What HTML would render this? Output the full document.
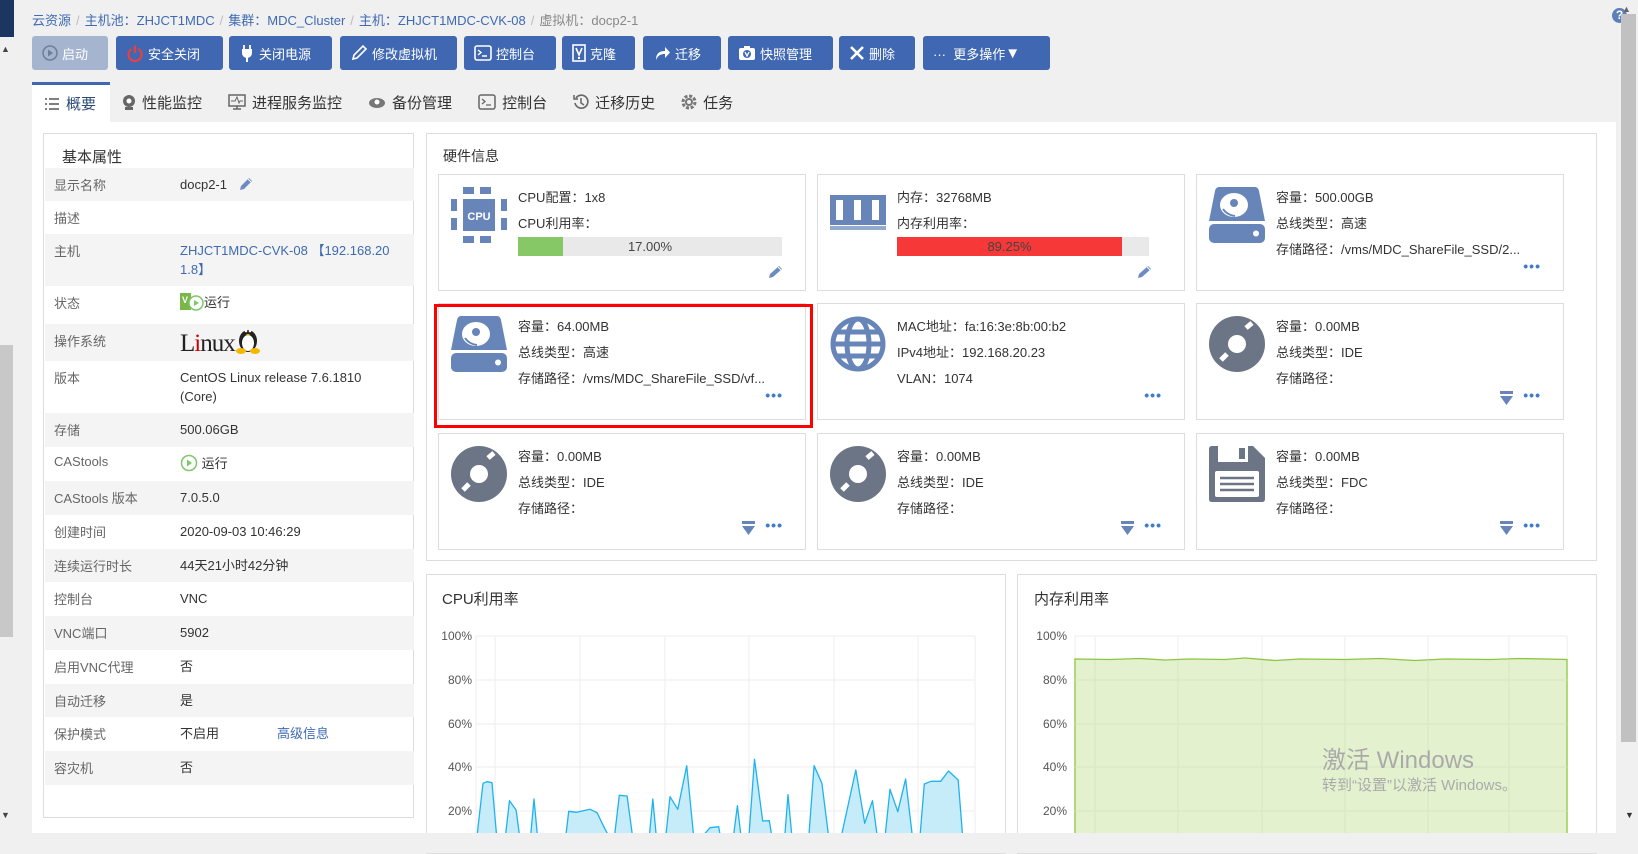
<!DOCTYPE html>
<html><head><meta charset="utf-8">
<style>
*{box-sizing:border-box;margin:0;padding:0}
body{width:1638px;height:844px;overflow:hidden;background:#f0f0f0;font-family:"Liberation Sans","Noto Sans CJK SC",sans-serif;font-size:13px;color:#333;position:relative}
.abs{position:absolute}
.bc{left:32px;top:10px;font-size:13px;color:#3f6ab3;white-space:nowrap}
.bc span.s{color:#bbb;margin:0 5px}
.bc .cur{color:#888}
.btn{position:absolute;top:36px;height:34px;background:#4068b2;border-radius:3px;color:#fff;font-size:13px;display:flex;align-items:center;padding-left:10px;white-space:nowrap}
.btn svg{margin-right:4px}
.tabs{left:32px;top:82px;height:40px;display:flex}
.tab{height:40px;display:flex;align-items:center;font-size:15px;color:#333;padding:0 14px 0 12px}
.tab.act{background:#fff;border-top:3px solid #4068b2;color:#2e4a7a}
.tab svg{margin-right:6px}
.main{left:32px;top:122px;width:1584px;height:711px;background:#fff}
.panel{position:absolute;border:1px solid #ddd;background:#fff}
.row{position:absolute;left:1px;width:369px;font-size:13px}
.row .l{position:absolute;left:9px;top:7px;color:#666}
.row .v{position:absolute;left:135px;top:7px;color:#333;width:225px;line-height:19px}
.g{background:#f4f4f4}
.card{position:absolute;width:368px;height:117px;border:1px solid #ddd;background:#fff}
.card .t{position:absolute;left:79px;font-size:13px;color:#333;white-space:nowrap}
.card .ic{position:absolute;left:12px;top:12px}
.dots{position:absolute;right:22px;bottom:16px;color:#3f7cc9;font-size:14px;font-weight:bold;letter-spacing:1px}
.tri{position:absolute;right:50px;bottom:14px}
.ylab{position:absolute;font-size:12px;color:#555;text-align:right;width:40px}
</style></head><body>

<div class="abs" style="left:0;top:0;width:14px;height:37px;background:#1b3660"></div>
<div class="abs" style="left:0;top:37px;width:14px;height:800px;background:#f0f0f0"></div>
<div class="abs" style="left:1px;top:44px;font-size:9px;color:#444">▲</div>
<div class="abs" style="left:0;top:345px;width:13px;height:292px;background:#c8c8c8"></div>
<div class="abs" style="left:1px;top:810px;font-size:9px;color:#444">▼</div>

<div class="abs bc"><span>云资源</span><span class="s">/</span><span>主机池：ZHJCT1MDC</span><span class="s">/</span><span>集群：MDC_Cluster</span><span class="s">/</span><span>主机：ZHJCT1MDC-CVK-08</span><span class="s">/</span><span class="cur">虚拟机：docp2-1</span></div>

<div class="abs" style="left:1612px;top:8px;width:15px;height:15px;border-radius:50%;background:#5b7fb8;color:#fff;font-size:12px;font-weight:bold;text-align:center;line-height:15px">?</div>
<div class="abs" style="left:1621px;top:28px;width:17px;height:816px;background:#f0f0f0"></div>
<div class="abs" style="left:1622px;top:4px;font-size:9px;color:#666">▲</div>
<div class="abs" style="left:1621px;top:14px;width:15px;height:728px;background:#c1c1c1"></div>
<div class="abs" style="left:1625px;top:810px;font-size:9px;color:#333">▼</div>

<div class="btn" style="left:32px;width:76px;background:#a5b5d0"><svg width="16" height="16"><circle cx="8" cy="8" r="7" fill="none" stroke="#6e7e98" stroke-width="1.5"/><path d="M6 4.5 L11 8 L6 11.5Z" fill="#6e7e98"/></svg>启动</div>
<div class="btn" style="left:116px;width:107px"><svg width="18" height="18"><path d="M5.5 5 A6.5 6.5 0 1 0 12.5 5" fill="none" stroke="#e74040" stroke-width="2.2"/><path d="M9 1.5 V9" stroke="#e74040" stroke-width="2.4"/></svg>安全关闭</div>
<div class="btn" style="left:229px;width:103px"><svg width="16" height="18"><path d="M5 1v4M11 1v4" stroke="#fff" stroke-width="1.8"/><path d="M3 5h10v4a5 5 0 0 1-10 0z" fill="#fff"/><path d="M8 13v5" stroke="#fff" stroke-width="2"/></svg>关闭电源</div>
<div class="btn" style="left:340px;width:117px"><svg width="18" height="18"><path d="M3 15 L4 11 L13 2 L16 5 L7 14Z" fill="none" stroke="#fff" stroke-width="1.6"/></svg>修改虚拟机</div>
<div class="btn" style="left:464px;width:92px"><svg width="18" height="16"><rect x="1" y="1" width="16" height="14" rx="2" fill="none" stroke="#fff" stroke-width="1.6"/><path d="M4 5l3 2.5-3 2.5M8 11h5" stroke="#fff" stroke-width="1.4" fill="none"/></svg>控制台</div>
<div class="btn" style="left:562px;width:73px"><svg width="14" height="18"><rect x="1" y="1" width="12" height="16" fill="none" stroke="#fff" stroke-width="1.6"/><path d="M4 4l3 7 3-7" stroke="#fff" stroke-width="1.6" fill="none"/><rect x="6" y="13" width="2" height="2" fill="#fff"/></svg>克隆</div>
<div class="btn" style="left:643px;width:78px"><svg width="18" height="16"><path d="M3 15 C3 8 7 6 12 6 V2 L17 7.5 L12 13 V9 C8 9 5 10 3 15Z" fill="#fff"/></svg>迁移</div>
<div class="btn" style="left:728px;width:105px"><svg width="18" height="16"><rect x="1" y="3" width="16" height="12" rx="2" fill="#fff"/><rect x="6" y="1" width="6" height="3" fill="#fff"/><circle cx="9" cy="9" r="4" fill="#4068b2"/><path d="M7 7l2 4 2-4" stroke="#fff" stroke-width="1.3" fill="none"/></svg>快照管理</div>
<div class="btn" style="left:839px;width:76px"><svg width="16" height="16"><path d="M2 2L14 14M14 2L2 14" stroke="#fff" stroke-width="2.6"/></svg>删除</div>
<div class="btn" style="left:923px;width:127px">··· &nbsp;更多操作<span style="font-size:15px">▼</span></div>

<div class="abs tabs">
<div class="tab act"><svg width="16" height="14"><path d="M1 2h2M5 2h10M1 7h2M5 7h10M1 12h2M5 12h10" stroke="#555" stroke-width="1.5"/></svg>概要</div>
<div class="tab"><svg width="14" height="16"><circle cx="7" cy="7" r="6" fill="#666"/><circle cx="7" cy="7" r="2.5" fill="#fff"/><rect x="3" y="13" width="8" height="3" fill="#666"/></svg>性能监控</div>
<div class="tab"><svg width="18" height="16"><rect x="1" y="1" width="16" height="11" fill="none" stroke="#666" stroke-width="1.5"/><path d="M3 7h4l2-4 2 6 1-2h3" stroke="#666" fill="none"/><path d="M9 12v3M5 15h8" stroke="#666" stroke-width="1.5"/></svg>进程服务监控</div>
<div class="tab"><svg width="18" height="14"><ellipse cx="9" cy="8" rx="8" ry="5" fill="#777"/><circle cx="9" cy="7" r="2.5" fill="#fff"/></svg>备份管理</div>
<div class="tab"><svg width="18" height="16"><rect x="1" y="1" width="16" height="14" rx="2" fill="none" stroke="#666" stroke-width="1.5"/><path d="M4 5l3 2.5-3 2.5M8 11h5" stroke="#666" stroke-width="1.3" fill="none"/></svg>控制台</div>
<div class="tab"><svg width="16" height="16"><path d="M3 4 A6.5 6.5 0 1 1 2 9" fill="none" stroke="#666" stroke-width="1.6"/><path d="M1 1v4h4" stroke="#666" stroke-width="1.5" fill="none"/><path d="M8 4v5l3 2" stroke="#666" stroke-width="1.5" fill="none"/></svg>迁移历史</div>
<div class="tab"><svg width="16" height="16"><circle cx="8" cy="8" r="6" fill="none" stroke="#777" stroke-width="3" stroke-dasharray="3 1.7"/><circle cx="8" cy="8" r="3" fill="none" stroke="#777" stroke-width="2"/></svg>任务</div>
</div>

<div class="abs main"></div>

<div class="panel" style="left:43px;top:133px;width:371px;height:685px">
<div class="abs" style="left:18px;top:12px;font-size:15px;color:#333">基本属性</div>
<div class="row g" style="top:34px;height:33px"><span class="l">显示名称</span><span class="v">docp2-1 &nbsp; <svg width="16" height="16" style="vertical-align:-3px"><path d="M2 14 L3 10 L11 2 L14 5 L6 13Z" fill="#6d8bc2"/><path d="M10 3l3 3" stroke="#fff"/></svg></span></div>
<div class="row" style="top:67px;height:33px"><span class="l">描述</span></div>
<div class="row g" style="top:100px;height:52px"><span class="l">主机</span><span class="v" style="color:#3f6ab3">ZHJCT1MDC-CVK-08 【192.168.20<br>1.8】</span></div>
<div class="row" style="top:152px;height:38px"><span class="l">状态</span><span class="v"><svg width="24" height="18" style="vertical-align:-4px"><rect x="0" y="0" width="11" height="17" fill="#7ab648"/><text x="2" y="10" font-size="9" fill="#fff" font-weight="bold" font-family="Liberation Sans">V</text><circle cx="16" cy="10" r="7" fill="#fff" stroke="#7cc86a" stroke-width="1.5"/><path d="M14 7l5 3-5 3z" fill="#7cc86a"/></svg>运行</span></div>
<div class="row g" style="top:190px;height:37px"><span class="l">操作系统</span><span class="v" style="top:0px;font-family:'Liberation Serif',serif;font-size:25px;color:#222;letter-spacing:-1px">L<span style="color:#c00">i</span>nux<svg width="26" height="30" style="vertical-align:-3px"><ellipse cx="13" cy="17" rx="9" ry="11" fill="#222"/><ellipse cx="13" cy="19" rx="6" ry="8" fill="#fff"/><circle cx="11" cy="7" r="1.3" fill="#fff"/><circle cx="15" cy="7" r="1.3" fill="#fff"/><path d="M11 10h4l-2 2z" fill="#f5b800"/><ellipse cx="6" cy="27" rx="5" ry="3" fill="#f5b800"/><ellipse cx="20" cy="27" rx="5" ry="3" fill="#f5b800"/></svg></span></div>
<div class="row" style="top:227px;height:52px"><span class="l">版本</span><span class="v">CentOS Linux release 7.6.1810<br>(Core)</span></div>
<div class="row g" style="top:279px;height:34px"><span class="l">存储</span><span class="v">500.06GB</span></div>
<div class="row" style="top:313px;height:34px"><span class="l">CAStools</span><span class="v"><svg width="18" height="18" style="vertical-align:-4px"><circle cx="9" cy="9" r="7.5" fill="#fff" stroke="#7cc86a" stroke-width="1.5"/><path d="M7 5.5l5 3.5-5 3.5z" fill="#7cc86a"/></svg> 运行</span></div>
<div class="row g" style="top:347px;height:34px"><span class="l">CAStools 版本</span><span class="v">7.0.5.0</span></div>
<div class="row" style="top:381px;height:34px"><span class="l">创建时间</span><span class="v">2020-09-03 10:46:29</span></div>
<div class="row g" style="top:415px;height:33px"><span class="l">连续运行时长</span><span class="v">44天21小时42分钟</span></div>
<div class="row" style="top:448px;height:34px"><span class="l">控制台</span><span class="v">VNC</span></div>
<div class="row g" style="top:482px;height:34px"><span class="l">VNC端口</span><span class="v">5902</span></div>
<div class="row" style="top:516px;height:34px"><span class="l">启用VNC代理</span><span class="v">否</span></div>
<div class="row g" style="top:550px;height:33px"><span class="l">自动迁移</span><span class="v">是</span></div>
<div class="row" style="top:583px;height:34px"><span class="l">保护模式</span><span class="v">不启用 <span style="position:absolute;left:97px;color:#3f6ab3">高级信息</span></span></div>
<div class="row g" style="top:617px;height:34px"><span class="l">容灾机</span><span class="v">否</span></div>
</div>

<div class="panel" style="left:426px;top:133px;width:1171px;height:428px">
<div class="abs" style="left:16px;top:12px;font-size:14px;color:#333">硬件信息</div>
</div>

<svg width="0" height="0" style="position:absolute">
<defs>
<g id="disk"><path d="M6 0 H46 Q49 0 50 4 L56 34 H0 L6 4 Q7 0 10 0Z" fill="#6785b9"/><ellipse cx="25" cy="18" rx="14" ry="12" fill="#fff"/><circle cx="25" cy="16" r="4" fill="#6785b9"/><path d="M14 22 Q18 28 26 29" stroke="#6785b9" stroke-width="2" fill="none"/><rect x="0" y="37" width="56" height="19" rx="5" fill="#6785b9"/><circle cx="47" cy="46.5" r="3" fill="#fff"/></g>
<g id="cd"><circle cx="28" cy="28" r="28" fill="#6b7585"/><circle cx="28" cy="28" r="9" fill="#fff"/><path d="M37 12 L43 7 M12 44 L18 38" stroke="#fff" stroke-width="5"/></g>
<g id="tri"><rect x="0" y="0" width="13" height="3" fill="#6785b9"/><path d="M0 5 H13 L6.5 14Z" fill="#6785b9"/></g>
</defs></svg>

<div class="card" style="left:438px;top:174px">
<svg class="ic" width="58" height="58"><rect x="12" y="0" width="11" height="7" fill="#6785b9"/><rect x="29" y="0" width="11" height="7" fill="#6785b9"/><rect x="12" y="49" width="11" height="7" fill="#6785b9"/><rect x="29" y="49" width="11" height="7" fill="#6785b9"/><rect x="0" y="12" width="6" height="12" fill="#6785b9"/><rect x="0" y="31" width="6" height="12" fill="#6785b9"/><rect x="50" y="12" width="6" height="12" fill="#6785b9"/><rect x="50" y="31" width="6" height="12" fill="#6785b9"/><rect x="12" y="12" width="32" height="32" fill="#6785b9"/><text x="28" y="33" font-size="11" font-weight="bold" fill="#fff" text-anchor="middle" font-family="Liberation Sans">CPU</text></svg>
<div class="t" style="top:12px">CPU配置：1x8</div>
<div class="t" style="top:38px">CPU利用率：</div>
<div class="abs" style="left:79px;top:62px;width:264px;height:19px;background:#e9e9e9"><div style="width:45px;height:19px;background:#86c866"></div><div class="abs" style="left:0;top:2px;width:264px;text-align:center;color:#444">17.00%</div></div>
<svg class="abs" style="left:328px;top:89px" width="18" height="16"><path d="M2 14 L3 10 L12 2 L15 5 L6 13Z" fill="#6d8bc2"/><path d="M11 3l3 3" stroke="#fff"/></svg>
</div>
<div class="card" style="left:817px;top:174px">
<svg class="ic" width="58" height="58" style="top:20px"><rect x="0" y="0" width="56" height="30" fill="#6785b9"/><rect x="6" y="5" width="7" height="20" fill="#fff"/><rect x="24" y="5" width="7" height="20" fill="#fff"/><rect x="42" y="5" width="7" height="20" fill="#fff"/><rect x="0" y="31" width="56" height="4" fill="#6785b9" opacity=".7"/></svg>
<div class="t" style="top:12px">内存：32768MB</div>
<div class="t" style="top:38px">内存利用率：</div>
<div class="abs" style="left:79px;top:62px;width:252px;height:19px;background:#e9e9e9"><div style="width:225px;height:19px;background:#f63838"></div><div class="abs" style="left:0;top:2px;width:225px;text-align:center;color:#444">89.25%</div></div>
<svg class="abs" style="left:318px;top:89px" width="18" height="16"><path d="M2 14 L3 10 L12 2 L15 5 L6 13Z" fill="#6d8bc2"/><path d="M11 3l3 3" stroke="#fff"/></svg>
</div>
<div class="card" style="left:1196px;top:174px">
<svg class="ic" width="58" height="58"><use href="#disk"/></svg>
<div class="t" style="top:12px">容量：500.00GB</div>
<div class="t" style="top:38px">总线类型：高速</div>
<div class="t" style="top:64px">存储路径：/vms/MDC_ShareFile_SSD/2...</div>
<div class="dots">•••</div>
</div>

<div class="card" style="left:438px;top:303px">
<svg class="ic" width="58" height="58"><use href="#disk"/></svg>
<div class="t" style="top:12px">容量：64.00MB</div>
<div class="t" style="top:38px">总线类型：高速</div>
<div class="t" style="top:64px">存储路径：/vms/MDC_ShareFile_SSD/vf...</div>
<div class="dots">•••</div>
</div>
<div class="abs" style="left:434px;top:304px;width:379px;height:124px;border:3px solid #f00"></div>
<div class="card" style="left:817px;top:303px">
<svg class="ic" width="58" height="58"><circle cx="28" cy="28" r="25" fill="none" stroke="#6785b9" stroke-width="5"/><ellipse cx="28" cy="28" rx="11" ry="25" fill="none" stroke="#6785b9" stroke-width="5"/><path d="M3 28h50M6 16h44M6 40h44" stroke="#6785b9" stroke-width="5"/></svg>
<div class="t" style="top:12px">MAC地址：fa:16:3e:8b:00:b2</div>
<div class="t" style="top:38px">IPv4地址：192.168.20.23</div>
<div class="t" style="top:64px">VLAN：1074</div>
<div class="dots">•••</div>
</div>
<div class="card" style="left:1196px;top:303px">
<svg class="ic" width="58" height="58"><use href="#cd"/></svg>
<div class="t" style="top:12px">容量：0.00MB</div>
<div class="t" style="top:38px">总线类型：IDE</div>
<div class="t" style="top:64px">存储路径：</div>
<svg class="tri" width="13" height="14"><use href="#tri"/></svg>
<div class="dots">•••</div>
</div>

<div class="card" style="left:438px;top:433px">
<svg class="ic" width="58" height="58"><use href="#cd"/></svg>
<div class="t" style="top:12px">容量：0.00MB</div>
<div class="t" style="top:38px">总线类型：IDE</div>
<div class="t" style="top:64px">存储路径：</div>
<svg class="tri" width="13" height="14"><use href="#tri"/></svg>
<div class="dots">•••</div>
</div>
<div class="card" style="left:817px;top:433px">
<svg class="ic" width="58" height="58"><use href="#cd"/></svg>
<div class="t" style="top:12px">容量：0.00MB</div>
<div class="t" style="top:38px">总线类型：IDE</div>
<div class="t" style="top:64px">存储路径：</div>
<svg class="tri" width="13" height="14"><use href="#tri"/></svg>
<div class="dots">•••</div>
</div>
<div class="card" style="left:1196px;top:433px">
<svg class="ic" width="58" height="58"><path d="M3 0 H44 L56 12 V53 Q56 56 53 56 H3 Q0 56 0 53 V3 Q0 0 3 0Z" fill="#6b7585"/><rect x="9" y="0" width="30" height="16" fill="#fff"/><rect x="30" y="2" width="6" height="11" fill="#6b7585"/><rect x="6" y="25" width="44" height="26" rx="2" fill="#fff"/><path d="M11 32h34M11 38h34M11 44h34" stroke="#6b7585" stroke-width="2.5"/></svg>
<div class="t" style="top:12px">容量：0.00MB</div>
<div class="t" style="top:38px">总线类型：FDC</div>
<div class="t" style="top:64px">存储路径：</div>
<svg class="tri" width="13" height="14"><use href="#tri"/></svg>
<div class="dots">•••</div>
</div>

<div class="panel" style="left:426px;top:574px;width:580px;height:280px">
<div class="abs" style="left:15px;top:13px;font-size:15px;color:#333">CPU利用率</div>
</div>
<div class="panel" style="left:1017px;top:574px;width:580px;height:280px">
<div class="abs" style="left:16px;top:13px;font-size:15px;color:#333">内存利用率</div>
</div>
<svg class="abs" style="left:0;top:0" width="1638" height="844">
<g stroke="#eee" stroke-width="1">
<path d="M476 636H975M476 680H975M476 724H975M476 767H975M476 811H975"/>
<path d="M476 636V844M495 636V844M580 636V844M665 636V844M749 636V844M834 636V844M918 636V844M975 636V844"/>
</g>
<path d="M476 845 L483 783.3 L486.9 781.7 L492 782.7 L497.4 845 L504.4 845 L509.5 800.7 L516.1 810 L520.8 845 L529.8 845 L534 799 L538.3 845 L564.8 845 L568.7 811.3 L576.5 812.3 L590.1 809.3 L597.1 812.7 L603.8 826.7 L613.5 845 L619.3 795.3 L627.1 796 L633.7 845 L648.5 845 L652.8 799 L657.1 845 L664.9 845 L670 796.7 L677.8 809.3 L686.7 765.7 L694.5 845 L710.1 827.7 L718.7 826.7 L721.8 845 L732.3 845 L737.4 805.7 L742 845 L748.3 845 L754.5 759.3 L762.7 821 L769.3 820.7 L773.2 845 L784.1 845 L788 794.7 L792.7 845 L808.2 845 L814.1 765.7 L821.9 783.3 L829.7 845 L839.4 845 L855.8 770 L864.7 823.3 L872.5 800.7 L878.4 845 L884.2 845 L890 789.3 L897.8 811.7 L905.6 779 L913.4 845 L919.3 845 L924.3 784 L931 781.3 L940.7 781.3 L948.5 771 L958.2 780 L963.3 845Z" fill="#c6ecfa" stroke="#1fb2ee" stroke-width="1.3" stroke-linejoin="round"/>
<g stroke="#eee" stroke-width="1">
<path d="M1075 636H1567M1075 680H1567M1075 724H1567M1075 767H1567M1075 811H1567"/>
<path d="M1075 636V844M1095 636V844M1178 636V844M1262 636V844M1345 636V844M1428 636V844M1509 636V844M1567 636V844"/>
</g>
<path d="M1075 659 L1110 659.5 L1140 658.5 L1165 660 L1190 659 L1225 659.5 L1245 658 L1275 660.5 L1300 659 L1345 659.5 L1380 658.5 L1415 660.5 L1445 659 L1490 659.5 L1520 658.5 L1567 659.5 L1567 844 L1075 844Z" fill="#e3f1cf" stroke="#8cc63f" stroke-width="1.3"/>
<path d="M1075 680H1567M1075 724H1567M1075 767H1567M1075 811H1567M1095 660V844M1178 660V844M1262 660V844M1345 660V844M1428 660V844M1509 660V844" stroke="#d6e7c2" stroke-width="1"/>
</svg>
<div class="ylab" style="left:432px;top:629px">100%</div>
<div class="ylab" style="left:432px;top:673px">80%</div>
<div class="ylab" style="left:432px;top:717px">60%</div>
<div class="ylab" style="left:432px;top:760px">40%</div>
<div class="ylab" style="left:432px;top:804px">20%</div>
<div class="ylab" style="left:1027px;top:629px">100%</div>
<div class="ylab" style="left:1027px;top:673px">80%</div>
<div class="ylab" style="left:1027px;top:717px">60%</div>
<div class="ylab" style="left:1027px;top:760px">40%</div>
<div class="ylab" style="left:1027px;top:804px">20%</div>

<div class="abs" style="left:1322px;top:740px;font-size:24px;color:#aaa">激活 Windows</div>
<div class="abs" style="left:1322px;top:774px;font-size:15px;color:#aaa">转到“设置”以激活 Windows。</div>

<div class="abs" style="left:14px;top:833px;width:1607px;height:20px;background:#f0f0f0"></div>
</body></html>
